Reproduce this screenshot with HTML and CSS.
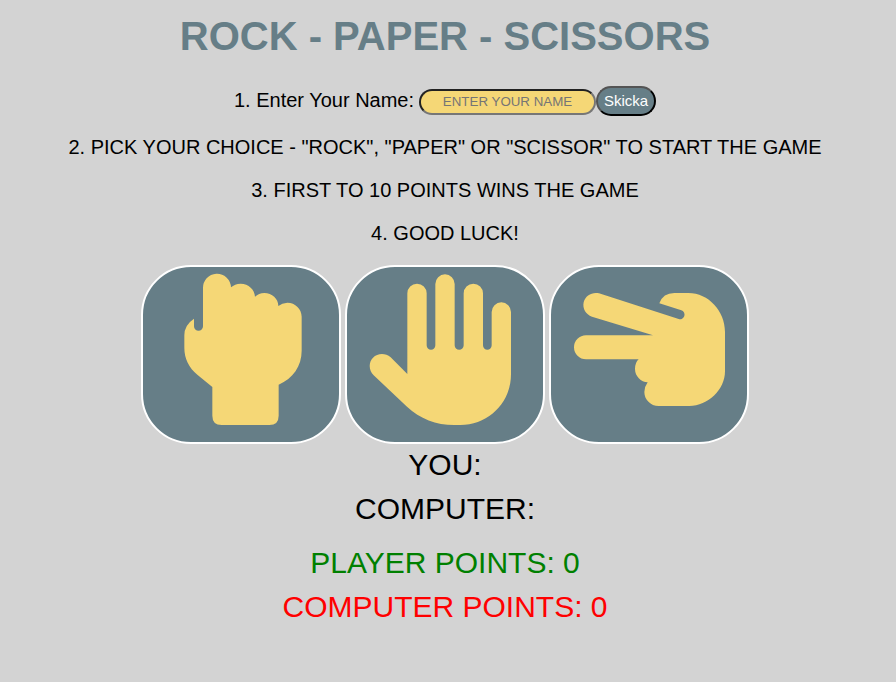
FILE: index.html
```html
<!DOCTYPE html>
<html lang="en">
<head>
<meta charset="utf-8">
<title>Rock - Paper - Scissors</title>
<link rel="stylesheet" href="styles.css">
</head>
<body>
<main class="game">
  <h1>ROCK - PAPER - SCISSORS</h1>
  <form class="name-form">
    <label for="name">1. Enter Your Name:</label>
    <input id="name" type="text" placeholder="ENTER YOUR NAME">
    <button class="send" type="button">Skicka</button>
  </form>
  <p>2. PICK YOUR CHOICE - "ROCK", "PAPER" OR "SCISSOR" TO START THE GAME</p>
  <p>3. FIRST TO 10 POINTS WINS THE GAME</p>
  <p>4. GOOD LUCK!</p>
  <div class="choices">
    <button class="choice" type="button" aria-label="Rock">
      <svg viewBox="24 21 588 525"><path d="M204 86A42 43 0 0 1 288 82Q299 72 317 71C341 71 359 89 360 110Q371 100 388 99C411 99 430 116 430 138Q441 129 457 128C481 128 500 147 500 170V272C500 318 474 355 431 374V467Q431 495 403 495H260Q232 495 232 467V381L187 344C162 323 148 296 148 263V226Q148 195 177 176V199A13.500 13.500 0 0 0 204 199Z"/></svg>
    </button>
    <button class="choice" type="button" aria-label="Paper">
      <svg viewBox="21 21 588 525"><path d="M202 100A29 29 0 0 1 260 100V256A13 13 0 0 0 286 256V72A29 29 0 0 1 344 72V256A13.500 13.500 0 0 0 371 256V100A29 29 0 0 1 429 100V256A13 13 0 0 0 455 256V156A29 29 0 0 1 513 156V343C513 428 446 495 361 495H343C288 495 240 476 201 440L101 346C86 331 85 307 99 293C113 279 136 278 152 292L202 342Z"/></svg>
    </button>
    <button class="choice" type="button" aria-label="Scissors">
      <svg viewBox="18 21 588 525"><path d="M343 130Q354 99 388 99H430C491 99 540 154 540 215V334C540 389 489 438 433 438H341C317 438 298 419 298 396Q299 379 308 367C288 366 270 349 270 327Q270 308 281 298H123A36 36 0 0 1 123 226H324L141 170C122 164 112 145 116 127C121 106 142 95 162 100L401 177A13.500 13.500 0 0 0 409 151Z"/></svg>
    </button>
  </div>
  <div class="result">YOU:</div>
  <div class="result">COMPUTER:</div>
  <div class="score">
    <div class="result player">PLAYER POINTS: 0</div>
    <div class="result computer">COMPUTER POINTS: 0</div>
  </div>
</main>
</body>
</html>
```
FILE: styles.css
```css
body {
  margin: 0;
  background: lightgray;
  color: black;
  font-family: Arial, "Liberation Sans", sans-serif;
  font-size: 20px;
}
.game {
  width: 890px;
  text-align: center;
}
h1 {
  margin: 0;
  padding-top: 13px;
  color: #667e87;
  font-size: 40px;
  line-height: 46px;
}
.name-form {
  display: flex;
  justify-content: center;
  align-items: center;
  margin: 27px 0 20px;
  height: 30px;
}
.name-form label {
  margin-right: 5px;
  padding-bottom: 2px;
  line-height: 23px;
}
input {
  box-sizing: border-box;
  width: 177px;
  height: 26px;
  margin: 2px 0 0;
  padding: 0 2px 2px;
  border: 2px inset #767676;
  border-radius: 20px;
  background: #f5d776;
  font: 13.333px Arial, "Liberation Sans", sans-serif;
  text-align: center;
}
input::placeholder {
  color: #757575;
}
.send {
  box-sizing: border-box;
  width: 60px;
  height: 30px;
  padding: 0 0 2px;
  border: 2px outset black;
  border-radius: 20px;
  background: #667e87;
  color: white;
  font: 15px Arial, "Liberation Sans", sans-serif;
}
p {
  margin: 0 0 20px;
  line-height: 23px;
}
.choices {
  display: flex;
  justify-content: center;
  gap: 4px;
  margin-bottom: 4px;
}
.choice {
  box-sizing: border-box;
  width: 200px;
  height: 179px;
  padding: 0;
  overflow: hidden;
  border: 2px solid white;
  border-radius: 50px;
  background: #667e87;
}
.choice svg {
  display: block;
  width: 196px;
  height: 175px;
  fill: #f5d776;
}
.result {
  margin-bottom: 10px;
  font-size: 30px;
  line-height: 34px;
}
.score {
  padding-top: 10px;
}
.player {
  color: green;
}
.computer {
  color: red;
}
```
